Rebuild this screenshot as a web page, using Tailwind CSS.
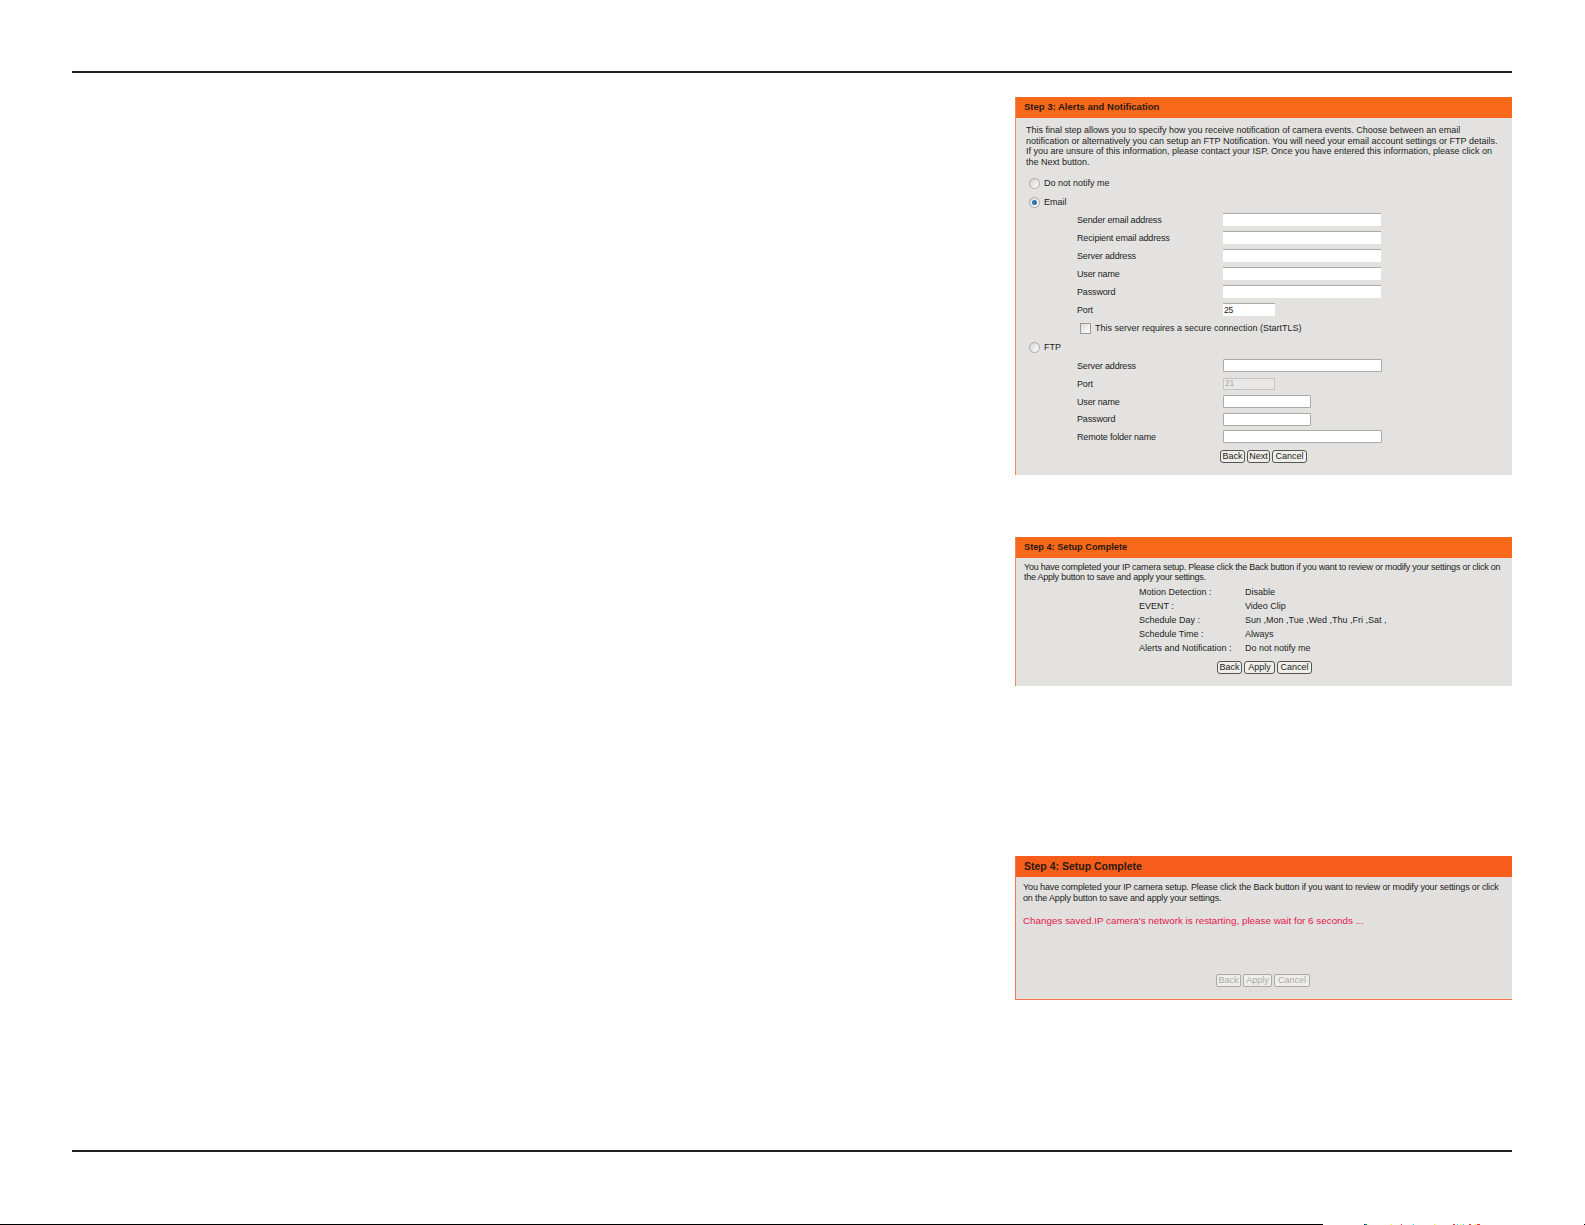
<!DOCTYPE html>
<html lang="en">
<head>
  <meta charset="UTF-8" />
  <title>Setup Wizard</title>
  <script src="https://cdn.jsdelivr.net/npm/@tailwindcss/browser@4"></script>
</head>
<body class="bg-white h-[1225px] overflow-hidden font-['Liberation_Sans',sans-serif] text-[9px] text-[#222] pt-[71px]">
  <div class="ml-[72px] w-[1440px]">
    <div class="h-[2px] bg-[#231f20]"></div>

    <!-- Step 3 -->
    <section class="ml-auto mt-[24px] w-[497px] h-[378px] bg-[#e3e2e0] border-l border-[#f08a50]">
      <h2 class="h-[21px] bg-[#f7681a] pl-[8px] font-bold text-[9.5px] leading-[20px] text-[#2a1a10]">Step 3: Alerts and Notification</h2>
      <p class="pl-[10px] pt-[7px] leading-[10.7px] whitespace-nowrap">This final step allows you to specify how you receive notification of camera events. Choose between an email<br />notification or alternatively you can setup an FTP Notification. You will need your email account settings or FTP details.<br />If you are unsure of this information, please contact your ISP. Once you have entered this information, please click on<br />the Next button.</p>
      <div class="flex items-center h-[19px] mt-[6px] pl-[13px]">
        <span class="w-[11px] h-[11px] rounded-full border border-[#a8a8a8] bg-linear-to-br from-[#d4d4d4] to-white"></span>
        <span class="ml-[4px]">Do not notify me</span>
      </div>
      <div class="flex items-center h-[19px] pl-[13px]">
        <span class="flex items-center justify-center w-[11px] h-[11px] rounded-full border border-[#a8a8a8] bg-linear-to-br from-[#d4d4d4] to-white"><span class="w-[5px] h-[5px] rounded-full bg-[#2b78b0]"></span></span>
        <span class="ml-[4px]">Email</span>
      </div>
      <div class="pl-[61px] -mt-[1px] tracking-[-0.15px]">
        <div class="flex items-center h-[18px]"><span class="w-[146px] pt-[1px]">Sender email address</span><input class="w-[158px] h-[13px] bg-white border-t border-[#aaa] outline-none" /></div>
        <div class="flex items-center h-[18px]"><span class="w-[146px] pt-[1px]">Recipient email address</span><input class="w-[158px] h-[13px] bg-white border-t border-[#aaa] outline-none" /></div>
        <div class="flex items-center h-[18px]"><span class="w-[146px] pt-[1px]">Server address</span><input class="w-[158px] h-[13px] bg-white border-t border-[#aaa] outline-none" /></div>
        <div class="flex items-center h-[18px]"><span class="w-[146px] pt-[1px]">User name</span><input class="w-[158px] h-[13px] bg-white border-t border-[#aaa] outline-none" /></div>
        <div class="flex items-center h-[18px]"><span class="w-[146px] pt-[1px]">Password</span><input class="w-[158px] h-[13px] bg-white border-t border-[#aaa] outline-none" /></div>
        <div class="flex items-center h-[18px]"><span class="w-[146px] pt-[1px]">Port</span><input value="25" class="w-[52px] h-[13px] bg-white border-t border-[#aaa] outline-none px-[1px] text-[8.5px]" /></div>
        <div class="flex items-center h-[19px] pl-[3px] tracking-normal">
          <span class="w-[11px] h-[11px] border border-[#999] bg-linear-to-br from-[#dcdcdc] to-white"></span>
          <span class="ml-[4px] pt-[1px]">This server requires a secure connection (StartTLS)</span>
        </div>
      </div>
      <div class="flex items-center h-[19px] pl-[13px]">
        <span class="w-[11px] h-[11px] rounded-full border border-[#a8a8a8] bg-linear-to-br from-[#d4d4d4] to-white"></span>
        <span class="ml-[4px] pt-[1px]">FTP</span>
      </div>
      <div class="pl-[61px] tracking-[-0.15px]">
        <div class="flex items-center h-[18px]"><span class="w-[146px] pt-[1px]">Server address</span><input class="w-[159px] h-[13px] bg-white border border-[#aaa] rounded-[1px] outline-none" /></div>
        <div class="flex items-center h-[18px]"><span class="w-[146px] pt-[1px]">Port</span><input value="21" disabled class="w-[52px] h-[12px] bg-[#e9e8e6] border border-[#c4c4c4] outline-none px-[1px] text-[8.5px] text-[#aaa]" /></div>
        <div class="flex items-center h-[18px]"><span class="w-[146px] pt-[1px]">User name</span><input class="w-[88px] h-[13px] bg-white border border-[#aaa] rounded-[1px] outline-none" /></div>
        <div class="flex items-center h-[17px]"><span class="w-[146px] pt-[1px]">Password</span><input class="w-[88px] h-[13px] bg-white border border-[#aaa] rounded-[1px] outline-none" /></div>
        <div class="flex items-center h-[18px]"><span class="w-[146px] pt-[1px]">Remote folder name</span><input class="w-[159px] h-[13px] bg-white border border-[#aaa] rounded-[1px] outline-none" /></div>
      </div>
      <div class="flex gap-[2px] mt-[4px] pl-[204px]">
        <button class="w-[25px] h-[13px] rounded-[3px] border border-[#555] bg-[#efeee9] leading-[11px]">Back</button>
        <button class="w-[23px] h-[13px] rounded-[3px] border border-[#555] bg-[#efeee9] leading-[11px]">Next</button>
        <button class="w-[35px] h-[13px] rounded-[3px] border border-[#555] bg-[#efeee9] leading-[11px]">Cancel</button>
      </div>
    </section>

    <!-- Step 4 -->
    <section class="ml-auto mt-[62px] w-[497px] h-[149px] bg-[#e3e2e0] border-l border-[#f08a50]">
      <h2 class="h-[21px] bg-[#f7681a] pl-[8px] font-bold text-[9.2px] leading-[21px] text-[#2a1a10]">Step 4: Setup Complete</h2>
      <p class="pl-[8px] pt-[4px] leading-[10.3px] tracking-[-0.24px] whitespace-nowrap">You have completed your IP camera setup. Please click the Back button if you want to review or modify your settings or click on<br />the Apply button to save and apply your settings.</p>
      <dl class="grid grid-cols-[106px_1fr] auto-rows-[14px] items-center pl-[123px] mt-[3px]">
        <dt>Motion Detection :</dt><dd>Disable</dd>
        <dt>EVENT :</dt><dd>Video Clip</dd>
        <dt>Schedule Day :</dt><dd>Sun ,Mon ,Tue ,Wed ,Thu ,Fri ,Sat ,</dd>
        <dt>Schedule Time :</dt><dd>Always</dd>
        <dt>Alerts and Notification :</dt><dd>Do not notify me</dd>
      </dl>
      <div class="flex gap-[2px] mt-[5px] pl-[201px]">
        <button class="w-[25px] h-[13px] rounded-[3px] border border-[#555] bg-[#efeee9] leading-[11px]">Back</button>
        <button class="w-[31px] h-[13px] rounded-[3px] border border-[#555] bg-[#efeee9] leading-[11px]">Apply</button>
        <button class="w-[35px] h-[13px] rounded-[3px] border border-[#555] bg-[#efeee9] leading-[11px]">Cancel</button>
      </div>
    </section>

    <section class="ml-auto mt-[170px] w-[497px] h-[144px] bg-[#e1e0de] border-l border-b border-[#f2794a]">
      <h2 class="h-[21px] bg-[#f65d1a] pl-[8px] font-bold leading-[21px] text-[#2a1a10] text-[10.5px]">Step 4: Setup Complete</h2>
      <p class="pl-[7px] pt-[5px] leading-[11px] tracking-[-0.15px] whitespace-nowrap">You have completed your IP camera setup. Please click the Back button if you want to review or modify your settings or click<br />on the Apply button to save and apply your settings.</p>
      <p class="pl-[7px] mt-[11px] text-[#e5174c] text-[9.85px] leading-[11px]">Changes saved.IP camera's network is restarting, please wait for 6 seconds ...</p>
      <div class="flex gap-[2px] mt-[48px] pl-[200px]">
        <button disabled class="w-[25px] h-[13px] rounded-[2px] border border-[#aaa] bg-[#efeeea] leading-[11px] text-[#aaa]">Back</button>
        <button disabled class="w-[29px] h-[13px] rounded-[2px] border border-[#aaa] bg-[#efeeea] leading-[11px] text-[#aaa]">Apply</button>
        <button disabled class="w-[36px] h-[13px] rounded-[2px] border border-[#aaa] bg-[#efeeea] leading-[11px] text-[#aaa]">Cancel</button>
      </div>
    </section>

    <div class="mt-[150px] h-[2px] bg-[#231f20]"></div>
  </div>

  <!-- scan edge along the bottom -->
  <div class="flex mt-[72px] h-[1px]">
    <div class="w-[1323px] bg-black"></div>
    <div class="w-[1px] bg-[#00f] ml-[41px]"></div>
    <div class="w-[2px] bg-[#0a0]"></div>
    <div class="w-[1px] bg-[#ff0] ml-[24px]"></div>
    <div class="w-[1px] bg-[#f33] ml-[9px]"></div>
    <div class="w-[1px] bg-[#0ff] ml-[11px]"></div>
    <div class="w-[1px] bg-[#ff0] ml-[20px]"></div>
    <div class="w-[2px] bg-[#f33] ml-[18px]"></div>
    <div class="w-[1px] bg-[#0ff] ml-[2px]"></div>
    <div class="w-[1px] bg-[#ff0] ml-[2px]"></div>
    <div class="w-[1px] bg-[#0ff] ml-[2px]"></div>
    <div class="w-[2px] bg-[#f33] ml-[5px]"></div>
    <div class="w-[1px] bg-[#ff0] ml-[4px]"></div>
    <div class="w-[3px] bg-[#f33] ml-[1px]"></div>
    <div class="w-[1px] bg-black ml-[104px]"></div>
  </div>
</body>
</html>
